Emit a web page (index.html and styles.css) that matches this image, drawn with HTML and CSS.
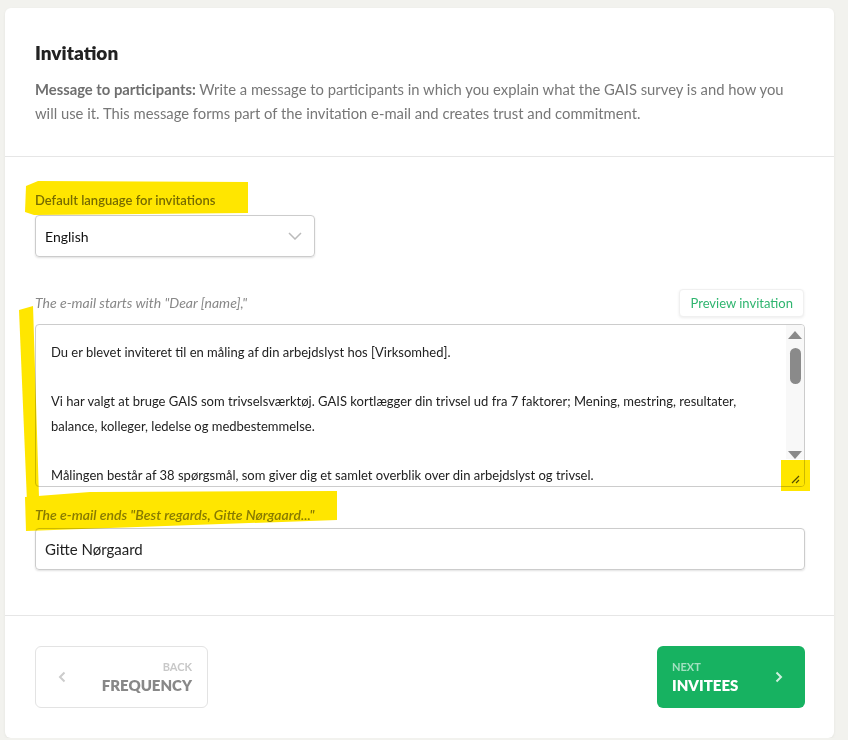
FILE: index.html
```html
<!DOCTYPE html>
<html lang="en">

<head>
    <meta charset="UTF-8">
    <meta name="viewport" content="width=device-width, initial-scale=1.0">
    <title>Invitation</title>
    <link rel="stylesheet" href="styles.css">
</head>

<body>

    <div class="card">
        <div class="card-header">
            <h2>Invitation</h2>
            <p><strong>Message to participants:</strong> Write a message to participants in which you explain what the GAIS survey is and how you will use it. This message forms part of the invitation e-mail and creates trust and commitment.</p>
        </div>

        <div class="card-body">
            <label class="field-label">Default language for invitations</label>
            <div class="select">
                <span>English</span>
                <svg width="14" height="8" viewBox="0 0 14 8"><path d="M1 1l6 6 6-6" fill="none" stroke="#bbb" stroke-width="1.5"/></svg>
            </div>

            <div class="message-head">
                <span class="hint">The e-mail starts with "Dear [name],"</span>
                <button class="preview-btn">Preview invitation</button>
            </div>
            <div class="message">
                <div class="message-text">
                    <p>Du er blevet inviteret til en måling af din arbejdslyst hos [Virksomhed].</p>
                    <p>Vi har valgt at bruge GAIS som trivselsværktøj. GAIS kortlægger din trivsel ud fra 7 faktorer; Mening, mestring, resultater,<br>balance, kolleger, ledelse og medbestemmelse.</p>
                    <p>Målingen består af 38 spørgsmål, som giver dig et samlet overblik over din arbejdslyst og trivsel.</p>
                </div>
                <div class="scrollbar">
                    <div class="arrow-up"></div>
                    <div class="thumb"></div>
                    <div class="track"></div>
                    <div class="arrow-down"></div>
                    <div class="grip">
                        <svg width="10" height="10" viewBox="0 0 10 10"><path d="M2 9L9 2M6 9L9 6" stroke="#555" stroke-width="1.2"/></svg>
                    </div>
                </div>
            </div>

            <span class="hint hint-end">The e-mail ends "Best regards, Gitte Nørgaard..."</span>
            <div class="text-input">Gitte Nørgaard</div>
        </div>

        <div class="card-footer">
            <button class="nav-btn back-btn">
                <svg width="8" height="12" viewBox="0 0 8 12"><path d="M6.5 1.5L2 6l4.5 4.5" fill="none" stroke="#ccc" stroke-width="2"/></svg>
                <span class="nav-text">
                    <small>BACK</small>
                    <b>FREQUENCY</b>
                </span>
            </button>
            <button class="nav-btn next-btn">
                <span class="nav-text">
                    <small>NEXT</small>
                    <b>INVITEES</b>
                </span>
                <svg width="8" height="12" viewBox="0 0 8 12"><path d="M1.5 1.5L6 6l-4.5 4.5" fill="none" stroke="rgba(255,255,255,0.8)" stroke-width="2"/></svg>
            </button>
        </div>
    </div>

    <!-- highlighter marks drawn over the screenshot -->
    <svg class="marks" width="848" height="740" viewBox="0 0 848 740">
        <polygon points="26,186 38,181 248,182 248,213 34,215 25,212"/>
        <polygon points="19,310 33,306 39,498 27,502"/>
        <polygon points="25,497 90,492 337,491 337,520 26,531"/>
        <rect x="781" y="460" width="29" height="31"/>
    </svg>

</body>

</html>
```

FILE: styles.css
```css
body {
    font-family: Lato, 'Open Sans', sans-serif;
    background-color: #f2f2ee;
    margin: 0;
}

.card {
    width: 829px;
    margin: 8px 0 0 5px;
    background-color: #fff;
    border-radius: 6px;
    box-shadow: 0 1px 3px rgba(0, 0, 0, 0.06);
}

.card-header {
    padding: 33px 30px 31px;
    border-bottom: 1px solid #e6e6e6;
}

.card-header h2 {
    margin: 0 0 12px;
    font-size: 19px;
    font-weight: 800;
    line-height: 24px;
    color: #222;
}

.card-header p {
    margin: 0;
    font-size: 14.8px;
    line-height: 24px;
    color: #777;
}

.card-header strong {
    color: #6f6f6f;
}

.card-body {
    padding: 34px 29px 45px 30px;
    border-bottom: 1px solid #e6e6e6;
}

.field-label {
    display: block;
    font-size: 13px;
    font-weight: 600;
    line-height: 18px;
    color: #777;
    margin-bottom: 6px;
}

.select {
    width: 280px;
    height: 42px;
    box-sizing: border-box;
    display: flex;
    align-items: center;
    justify-content: space-between;
    padding: 0 12px 0 9px;
    border: 1px solid #ccc;
    border-radius: 4px;
    box-shadow: 0 1px 2px rgba(0, 0, 0, 0.12);
    font-size: 14px;
    color: #111;
}

.message-head {
    display: flex;
    justify-content: space-between;
    align-items: center;
    margin-top: 32px;
    margin-bottom: 7px;
}

.hint {
    font-size: 14px;
    font-style: italic;
    color: #888;
    line-height: 18px;
}

.preview-btn {
    font-family: inherit;
    font-size: 13px;
    color: #2fb56f;
    background: #fff;
    height: 28px;
    padding: 0 10px;
    border: 1px solid #f0f0f0;
    border-radius: 4px;
    box-shadow: 0 1px 3px rgba(0, 0, 0, 0.08);
    margin-right: 1px;
}

.message {
    display: flex;
    height: 163px;
    box-sizing: border-box;
    border: 1px solid #ccc;
    border-radius: 4px;
    overflow: hidden;
}

.message-text {
    flex: 1;
    padding: 15px 15px 0;
    overflow: hidden;
    font-size: 13px;
    line-height: 24.5px;
    color: #222;
}

.message-text p {
    margin: 0 0 24.5px;
}

.scrollbar {
    width: 18px;
    display: flex;
    flex-direction: column;
    align-items: center;
    background-color: #f8f8f8;
}

.arrow-up,
.arrow-down {
    width: 0;
    height: 0;
    border-left: 7px solid transparent;
    border-right: 7px solid transparent;
}

.arrow-up {
    margin-top: 6px;
    border-bottom: 8px solid #8a8a8a;
}

.arrow-down {
    border-top: 8px solid #8a8a8a;
}

.thumb {
    width: 11px;
    height: 36px;
    margin-top: 9px;
    border-radius: 6px;
    background-color: #8a8a8a;
}

.track {
    flex: 1;
}

.grip {
    width: 18px;
    height: 27px;
    display: flex;
    align-items: flex-end;
    justify-content: center;
    padding-bottom: 2px;
    box-sizing: border-box;
    background-color: #fff;
}

.hint-end {
    display: block;
    margin-top: 19px;
    margin-bottom: 4px;
    font-weight: 600;
}

.text-input {
    height: 42px;
    box-sizing: border-box;
    display: flex;
    align-items: center;
    padding: 0 9px;
    border: 1px solid #ccc;
    border-radius: 4px;
    box-shadow: 0 1px 2px rgba(0, 0, 0, 0.12);
    font-size: 15px;
    color: #222;
}

.card-footer {
    display: flex;
    justify-content: space-between;
    padding: 30px 29px 30px 30px;
}

.nav-btn {
    font-family: inherit;
    height: 62px;
    display: flex;
    align-items: center;
    justify-content: space-between;
    padding: 0 15px;
    border-radius: 6px;
    cursor: pointer;
}

.nav-text {
    display: flex;
    flex-direction: column;
    line-height: 16px;
}

.nav-text small {
    font-size: 11px;
    font-weight: 700;
}

.nav-text b {
    font-size: 15px;
    font-weight: 800;
    line-height: 20px;
}

.back-btn {
    width: 173px;
    padding-left: 22px;
    background: #fff;
    border: 1px solid #e3e3e3;
}

.back-btn .nav-text {
    text-align: right;
}

.back-btn small {
    color: #c8c8c8;
}

.back-btn b {
    color: #888;
}

.next-btn {
    width: 148px;
    padding-right: 22px;
    background-color: #17b261;
    border: none;
    text-align: left;
}

.next-btn small {
    color: rgba(255, 255, 255, 0.6);
}

.next-btn b {
    color: #fff;
}

.marks {
    position: absolute;
    left: 0;
    top: 0;
    pointer-events: none;
    mix-blend-mode: multiply;
    fill: #ffe600;
}
```
